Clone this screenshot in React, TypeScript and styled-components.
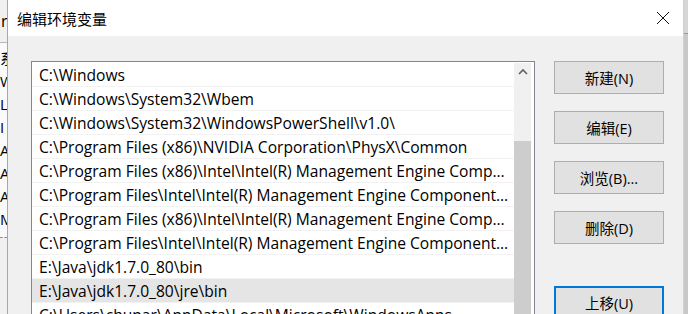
import styled, { createGlobalStyle } from 'styled-components';

const GlobalStyle = createGlobalStyle`
  html, body {
    margin: 0;
    padding: 0;
    background: #f0f0f0;
  }
  body {
    font-family: "Open Sans", "Noto Sans CJK SC", sans-serif;
    color: #000;
  }
`;

const uiFont = `"Open Sans", "Noto Sans CJK SC", sans-serif`;

const Screen = styled.div`
  display: flex;
  width: 688px;
  height: 314px;
  overflow: hidden;
`;

const BackLeft = styled.div`
  width: 7px;
  flex: none;
  display: flex;
  flex-direction: column;
  background: #fafafa;
  border-right: 1px solid #a8a8a8;
  overflow: hidden;
  font: 15px ${uiFont};
`;

const BackHead = styled.div`
  height: 42px;
  flex: none;
  display: flex;
  align-items: center;
  background: #f0f0f0;
  border-bottom: 1px solid #b8b8b8;
  padding-left: 1px;
  margin-bottom: 4px;
  font-size: 16px;
`;

const BackItem = styled.div`
  height: 23px;
  flex: none;
  line-height: 23px;
  white-space: nowrap;
`;

const BackFoot = styled.div`
  margin-top: 6px;
  border-top: 1px dashed #8a8a8a;
  flex: 1;
  background: #f0f0f0;
`;

const BackRight = styled.div`
  width: 4px;
  flex: none;
  background: #c9c9c9;
  display: flex;
  flex-direction: column;
`;

const BackRightTop = styled.div`
  height: 33px;
  border-bottom: 1px solid #9a9a9a;
  background: #d6d6d6;
`;

const Dialog = styled.div`
  flex: 1;
  display: flex;
  flex-direction: column;
  background: #f0f0f0;
  border-right: 1px solid #efc9ab;
`;

const TitleBar = styled.div`
  height: 36px;
  flex: none;
  display: flex;
  align-items: center;
  justify-content: space-between;
  background: #fff;
  padding: 0 13px 0 9px;
`;

const Title = styled.div`
  font: 15px ${uiFont};
  color: #000;
`;

const Close = styled.svg`
  width: 14px;
  height: 14px;
  display: block;
`;

const Body = styled.div`
  flex: 1;
  display: flex;
  gap: 19px;
  padding: 25px 19px 0 23px;
  min-height: 0;
`;

const ListBox = styled.div`
  width: 504px;
  box-sizing: border-box;
  flex: none;
  display: flex;
  border: 1px solid #828790;
  border-bottom: none;
  background: #fff;
  padding: 1px 3px 0 0;
  overflow: hidden;
`;

const Rows = styled.ul`
  flex: 1;
  margin: 0;
  padding: 0;
  list-style: none;
  min-width: 0;
`;

const Row = styled.li<{ $selected?: boolean }>`
  height: 24px;
  box-sizing: border-box;
  padding: 1px 2px 0 7px;
  border-bottom: 1px solid #f2f2f2;
  background: ${({ $selected }) => ($selected ? '#e5e5e5' : 'transparent')};
  font: 15.6px/22px ${uiFont};
  color: #000;
  white-space: nowrap;
  overflow: hidden;
  text-overflow: ellipsis;
`;

const ScrollBar = styled.div`
  width: 17px;
  flex: none;
  display: flex;
  flex-direction: column;
  background: #f0f0f0;
`;

const ArrowBtn = styled.div`
  height: 17px;
  display: flex;
  align-items: center;
  justify-content: center;
`;

const Track = styled.div<{ $h: number }>`
  height: ${({ $h }) => $h}px;
  flex: none;
`;

const Thumb = styled.div`
  flex: 1;
  background: #cdcdcd;
`;

const Buttons = styled.div`
  width: 110px;
  flex: none;
  display: flex;
  flex-direction: column;
`;

const Button = styled.button<{ $focus?: boolean; $gap?: number }>`
  height: 33px;
  width: 110px;
  margin-top: ${({ $gap }) => $gap ?? 0}px;
  flex: none;
  box-sizing: border-box;
  background: #e1e1e1;
  border: ${({ $focus }) => ($focus ? '2px solid #0078d7' : '1px solid #adadad')};
  font: 14.5px ${uiFont};
  color: #000;
  padding: 0;
`;

const paths = [
  'C:\\Windows',
  'C:\\Windows\\System32\\Wbem',
  'C:\\Windows\\System32\\WindowsPowerShell\\v1.0\\',
  'C:\\Program Files (x86)\\NVIDIA Corporation\\PhysX\\Common',
  'C:\\Program Files (x86)\\Intel\\Intel(R) Management Engine Components\\DAL',
  'C:\\Program Files\\Intel\\Intel(R) Management Engine Components\\DAL',
  'C:\\Program Files (x86)\\Intel\\Intel(R) Management Engine Components\\IPT',
  'C:\\Program Files\\Intel\\Intel(R) Management Engine Components\\IPT',
  'E:\\Java\\jdk1.7.0_80\\bin',
  'E:\\Java\\jdk1.7.0_80\\jre\\bin',
  'C:\\Users\\chunar\\AppData\\Local\\Microsoft\\WindowsApps',
];

const backItems = ['系', 'W', 'L', 'I', 'A', 'A', 'A', 'M'];

export default function App() {
  return (
    <>
      <GlobalStyle />
      <Screen>
        <BackLeft>
          <BackHead>r</BackHead>
          {backItems.map((t, i) => (
            <BackItem key={i}>{t}</BackItem>
          ))}
          <BackFoot />
        </BackLeft>
        <Dialog>
          <TitleBar>
            <Title>编辑环境变量</Title>
            <Close viewBox="0 0 14 14">
              <path d="M1 1L13 13M13 1L1 13" stroke="#111" strokeWidth="1" fill="none" />
            </Close>
          </TitleBar>
          <Body>
            <ListBox>
              <Rows>
                {paths.map((p, i) => (
                  <Row key={p} $selected={i === 9}>
                    {p}
                  </Row>
                ))}
              </Rows>
              <ScrollBar>
                <ArrowBtn>
                  <svg width="10" height="7" viewBox="0 0 10 7">
                    <path d="M1 6L5 2L9 6" stroke="#606060" strokeWidth="1.6" fill="none" />
                  </svg>
                </ArrowBtn>
                <Track $h={61} />
                <Thumb />
              </ScrollBar>
            </ListBox>
            <Buttons>
              <Button>新建(N)</Button>
              <Button $gap={17}>编辑(E)</Button>
              <Button $gap={17}>浏览(B)...</Button>
              <Button $gap={17}>删除(D)</Button>
              <Button $gap={42} $focus>
                上移(U)
              </Button>
            </Buttons>
          </Body>
        </Dialog>
        <BackRight>
          <BackRightTop />
        </BackRight>
      </Screen>
    </>
  );
}
